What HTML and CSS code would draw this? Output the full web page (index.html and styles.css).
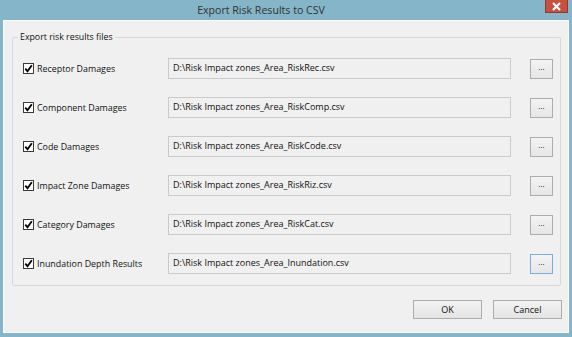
FILE: index.html
```html
<!DOCTYPE html>
<html lang="en">
<head>
    <meta charset="UTF-8">
    <meta name="viewport" content="width=device-width, initial-scale=1.0">
    <title>Export Risk Results to CSV</title>
    <link rel="stylesheet" href="styles.css">
</head>
<body>
    <div class="window">
        <header class="titlebar">
            <span class="title">Export Risk Results to CSV</span>
            <button class="close" type="button" aria-label="Close">
                <svg width="11" height="9" viewBox="0 0 11 9">
                    <path d="M2 1 L9 8 M9 1 L2 8" stroke="#fff" stroke-width="2.2" fill="none"/>
                </svg>
            </button>
        </header>
        <div class="client">
            <section class="group">
                <span class="group-title">Export risk results files</span>
                <div class="rows">
                    <div class="row">
                        <label class="check"><span class="box"><svg width="9" height="9" viewBox="0 0 9 9"><path d="M1.3 4.6 L3.5 7.2 L7.8 1.2" stroke="#000" stroke-width="1.8" fill="none"/></svg></span>Receptor Damages</label>
                        <div class="path">D:\Risk Impact zones_Area_RiskRec.csv</div>
                        <button class="browse" type="button">...</button>
                    </div>
                    <div class="row">
                        <label class="check"><span class="box"><svg width="9" height="9" viewBox="0 0 9 9"><path d="M1.3 4.6 L3.5 7.2 L7.8 1.2" stroke="#000" stroke-width="1.8" fill="none"/></svg></span>Component Damages</label>
                        <div class="path">D:\Risk Impact zones_Area_RiskComp.csv</div>
                        <button class="browse" type="button">...</button>
                    </div>
                    <div class="row">
                        <label class="check"><span class="box"><svg width="9" height="9" viewBox="0 0 9 9"><path d="M1.3 4.6 L3.5 7.2 L7.8 1.2" stroke="#000" stroke-width="1.8" fill="none"/></svg></span>Code Damages</label>
                        <div class="path">D:\Risk Impact zones_Area_RiskCode.csv</div>
                        <button class="browse" type="button">...</button>
                    </div>
                    <div class="row">
                        <label class="check"><span class="box"><svg width="9" height="9" viewBox="0 0 9 9"><path d="M1.3 4.6 L3.5 7.2 L7.8 1.2" stroke="#000" stroke-width="1.8" fill="none"/></svg></span>Impact Zone Damages</label>
                        <div class="path">D:\Risk Impact zones_Area_RiskRiz.csv</div>
                        <button class="browse" type="button">...</button>
                    </div>
                    <div class="row">
                        <label class="check"><span class="box"><svg width="9" height="9" viewBox="0 0 9 9"><path d="M1.3 4.6 L3.5 7.2 L7.8 1.2" stroke="#000" stroke-width="1.8" fill="none"/></svg></span>Category Damages</label>
                        <div class="path">D:\Risk Impact zones_Area_RiskCat.csv</div>
                        <button class="browse" type="button">...</button>
                    </div>
                    <div class="row">
                        <label class="check"><span class="box"><svg width="9" height="9" viewBox="0 0 9 9"><path d="M1.3 4.6 L3.5 7.2 L7.8 1.2" stroke="#000" stroke-width="1.8" fill="none"/></svg></span>Inundation Depth Results</label>
                        <div class="path">D:\Risk Impact zones_Area_Inundation.csv</div>
                        <button class="browse focused" type="button">...</button>
                    </div>
                </div>
            </section>
            <footer class="actions">
                <button class="btn" type="button">OK</button>
                <button class="btn" type="button">Cancel</button>
            </footer>
        </div>
    </div>
</body>
</html>
```

FILE: styles.css
```css
body {
    margin: 0;
    background: #85b5c8;
    font-family: "Open Sans", "Noto Sans", sans-serif;
    color: #111;
}

.window {
    height: 337px;
    display: flex;
    flex-direction: column;
}

.titlebar {
    position: relative;
    height: 20px;
    padding-right: 50px;
    display: flex;
    align-items: center;
    justify-content: center;
}

.title {
    font-size: 10.6px;
    color: #333;
    margin-top: -1px;
}

.close {
    position: absolute;
    top: 0;
    right: 4px;
    width: 23px;
    height: 13px;
    padding: 0;
    border: 1px solid #8c3b33;
    border-top: none;
    background: #c7503f;
    display: flex;
    align-items: center;
    justify-content: center;
}

.client {
    flex: 1;
    margin: 0 3px 4px 3px;
    background: #f0f0f0;
    box-shadow: inset 0 0 0 1px #fbfbfb;
    display: flex;
    flex-direction: column;
}

.group {
    position: relative;
    margin: 17px 8px 0 9px;
    height: 247px;
    border: 1px solid #d8d8d8;
    border-radius: 2px;
}

.group-title {
    position: absolute;
    top: -8px;
    left: 5px;
    padding: 0 2px;
    background: #f0f0f0;
    font-size: 8.8px;
    line-height: 14px;
}

.rows {
    display: flex;
    flex-direction: column;
    gap: 18px;
    padding: 20px 0 0 10px;
}

.row {
    display: flex;
    align-items: center;
    height: 21px;
}

.check {
    width: 145px;
    display: flex;
    align-items: center;
    font-size: 8.9px;
}

.box {
    width: 9px;
    height: 9px;
    margin-right: 3px;
    border: 1px solid #3a3a3a;
    background: #fff;
    display: flex;
}

.path {
    width: 337px;
    height: 19px;
    padding-left: 4px;
    border: 1px solid #cacaca;
    background: #f0f0f0;
    font-size: 9px;
    line-height: 18px;
}

.browse {
    margin-left: 19px;
    width: 23px;
    height: 20px;
    padding: 0 0 4px;
    border: 1px solid #adadad;
    background: linear-gradient(#f3f3f3, #e6e6e6);
    font-family: inherit;
    font-size: 8px;
    color: #111;
}

.browse.focused {
    border-color: #78aee5;
}

.actions {
    display: flex;
    justify-content: flex-end;
    gap: 11px;
    margin: 14px 7px 0 0;
}

.btn {
    width: 69px;
    height: 19px;
    padding: 0;
    border: 1px solid #acacac;
    background: linear-gradient(#f2f2f2, #e4e4e4);
    font-family: inherit;
    font-size: 9px;
    color: #111;
}
```
